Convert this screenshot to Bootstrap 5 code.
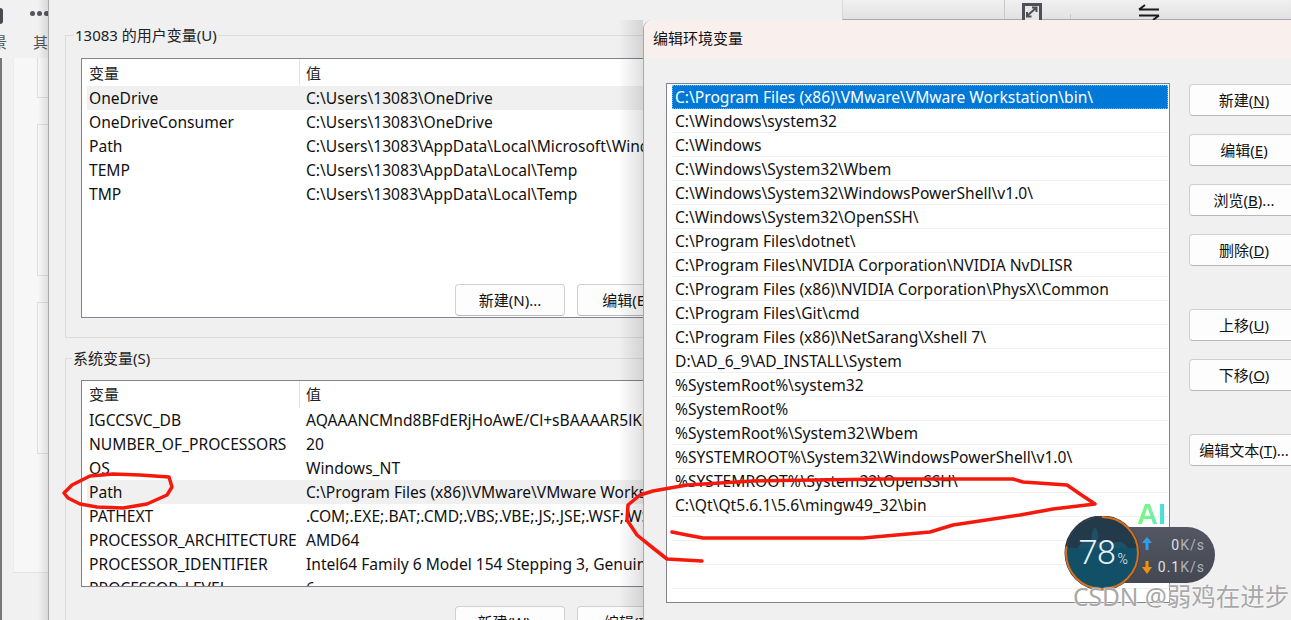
<!DOCTYPE html>
<html lang="zh-CN">
<head>
<meta charset="utf-8">
<title>编辑环境变量</title>
<link href="https://cdn.jsdelivr.net/npm/bootstrap@5.3.0/dist/css/bootstrap.min.css" rel="stylesheet">
<style>
html,body{margin:0;height:620px;overflow:hidden}
body{background:#f0f0f0;font-family:"Noto Sans","Noto Sans CJK SC",sans-serif;font-size:15.6px;color:#111;position:relative}
.win{position:absolute}
.bgwin{left:0;top:0;width:48px;height:620px;background:#f1f1f1;overflow:hidden}
.bg-dots{position:absolute;left:30px;top:11px;display:flex;gap:2px}
.bg-dots i{width:5px;height:5px;border-radius:50%;background:#55555f;display:block}
.bg-glyph{position:absolute;top:33px;font-size:15px;color:#555;line-height:18px}
.bg-mark{position:absolute;left:-3px;top:8px;width:6px;height:16px;border-radius:3px;background:#4a4a52}
.bg-edge{position:absolute;left:0;top:58px;bottom:0;width:2px;background:#77777c}
.bg-pane{position:absolute;left:13px;top:58px;width:60px;height:515px;background:#f7f7f7;border-bottom:1px solid #e2e2e2;border-left:1px solid #ececec}
.bg-cardbox{position:absolute;left:37px;width:40px;background:#f8f8f8;border:1px solid #dfdfdf}
.bg-cardbox.first{border-top:0}
.bg-shade{position:absolute;left:38px;top:0;bottom:0;width:10px;background:linear-gradient(90deg,rgba(0,0,0,0),rgba(0,0,0,.1))}
.varwin{left:48px;top:0;width:595px;height:620px;background:#f0f0f0;border-left:1px solid #a9a9ad;padding:35px 0 0 16px;overflow:hidden}
.grp{position:relative;width:760px;border:1px solid #dcdcdc;border-right:0}
.grp-user{height:303px}
.grp-sys{height:300px;margin-top:20px}
.grp-title{position:absolute;left:8px;top:-11px;padding:0 1px;line-height:20px;background:#f0f0f0;font-size:15px;color:#222}
.grp-sys .grp-title{left:6px}
.listv{position:absolute;left:15px;width:700px;background:#fff;border:1px solid #82828c;overflow:hidden;padding-left:5px}
.grp-user .listv{top:22px;height:260px}
.grp-sys .listv{top:21px;height:207px}
.rowv{display:flex;height:24px;line-height:24px;white-space:nowrap}
.rowv.headv{height:27px;line-height:29px;color:#222;font-size:15px}
.rowv.headv .cn{border-right:1px solid #e5e5e5}
.rowv.sysh{height:27px;line-height:27px}
.rowv.hl{background:#f0f0f0}
.cn{width:213px;flex:none;padding-left:2px;overflow:hidden}
.cv{padding-left:6px}
.wbtn{position:absolute;width:110px;height:32px;padding:0;background:#fdfdfd;border:1px solid #d0d0d0;border-bottom-color:#b8b8b8;border-radius:4px;font-size:15px;line-height:28px;color:#111;text-align:center;white-space:nowrap}
.editwin{left:643px;top:20px;width:648px;height:600px;background:#f0f0f0;border-left:1px solid #a8a8ac;border-top-left-radius:9px;overflow:hidden}
.editshadow{position:absolute;left:618px;top:20px;width:25px;height:600px;background:linear-gradient(90deg,rgba(0,0,0,0),rgba(0,0,0,.12))}
.edit-title{height:38px;background:#f9f0ed;line-height:37px;padding-left:9px;font-size:15px;color:#111}
.edit-body{display:flex;padding:25px 0 0 22px}
.listb{width:504px;height:520px;flex:none;background:#fff;border:1px solid #82828c;padding:1px 1px 0 5px;overflow:hidden}
.itm{height:24px;line-height:25px;padding-left:3px;border-bottom:1px solid #f0f0f0;white-space:nowrap}
.itm.sel{background:#0078d7;color:#fff;outline:1px dotted #7ab6ea;outline-offset:-1px;border-bottom:0}
.btnstack{display:flex;flex-direction:column;margin-left:19px;margin-top:1px}
.btnstack .wbtn{position:static;margin-bottom:18px;flex:none}
.btnstack .gap1{margin-top:25px}
.topbar{left:842px;top:0;width:449px;height:20px;background:linear-gradient(180deg,#f0f0f0,#e2e2e2);border-left:1px solid #d8d8d8;border-bottom:1px solid #a9a9ad}
.sep1,.sep2{position:absolute;width:1px;background:#c9c9c9;bottom:0}
.sep1{left:161px;top:0}.sep2{left:227px;top:14px}
.ink{position:absolute;left:0;top:0;width:1291px;height:620px;pointer-events:none}
.gauge{position:absolute;left:1064px;top:516px;width:152px;height:74px}
.pill{position:absolute;left:38px;top:11px;width:113px;height:56px;border-radius:0 28px 28px 0;background:linear-gradient(180deg,#545763,#444852);color:#aeb2ba;font-family:Roboto,sans-serif;font-size:14px;letter-spacing:1px}
.rate{position:absolute;right:10px;line-height:20px;white-space:nowrap}
.rate b{font-weight:400;color:#dfe1e5}
.pct{position:absolute;left:12px;top:16px;width:54px;text-align:center;color:#e8f2f6;font-family:Roboto,sans-serif;font-weight:300;font-size:34px;line-height:40px;white-space:nowrap;letter-spacing:-.5px}
.pct small{font-size:14px;margin-left:2px}
.ai{position:absolute;left:1137px;top:498px;font-family:"Liberation Sans",sans-serif;font-weight:700;font-size:29px;line-height:32px;background:linear-gradient(90deg,#7cf57d,#74f2a0 50%,#3fd6f0);-webkit-background-clip:text;background-clip:text;color:transparent}
.mark-wm{position:absolute;left:1073px;top:580px;font-family:"Noto Sans","Noto Sans CJK SC",sans-serif;font-size:24.5px;line-height:34px;color:#a8a8a8;white-space:nowrap;text-shadow:0 0 2px #fff,0 0 1px #fff}
</style>
</head>
<body>

<div class="win bgwin">
  <div class="bg-mark"></div>
  <div class="bg-dots"><i></i><i></i><i></i></div>
  <div class="bg-glyph" style="left:-8px">景</div>
  <div class="bg-glyph" style="left:33px">其</div>
  <div class="bg-pane"></div>
  <div class="bg-cardbox first" style="top:58px;height:40px"></div>
  <div class="bg-cardbox" style="top:124px;height:152px"></div>
  <div class="bg-cardbox" style="top:302px;height:152px"></div>
  <div class="bg-edge"></div>
  <div class="bg-shade"></div>
</div>

<div class="win varwin">
  <div class="grp grp-user">
    <div class="grp-title">13083 的用户变量(U)</div>
    <div class="listv">
      <div class="rowv headv"><div class="cn">变量</div><div class="cv">值</div></div>
      <div class="rowv hl"><div class="cn">OneDrive</div><div class="cv">C:\Users\13083\OneDrive</div></div>
      <div class="rowv"><div class="cn">OneDriveConsumer</div><div class="cv">C:\Users\13083\OneDrive</div></div>
      <div class="rowv"><div class="cn">Path</div><div class="cv">C:\Users\13083\AppData\Local\Microsoft\WindowsApps</div></div>
      <div class="rowv"><div class="cn">TEMP</div><div class="cv">C:\Users\13083\AppData\Local\Temp</div></div>
      <div class="rowv"><div class="cn">TMP</div><div class="cv">C:\Users\13083\AppData\Local\Temp</div></div>
    </div>
    <button class="wbtn btn" style="left:389px;top:248px">新建(N)...</button>
    <button class="wbtn btn" style="left:511px;top:248px">编辑(E)...</button>
  </div>
  <div class="grp grp-sys">
    <div class="grp-title">系统变量(S)</div>
    <div class="listv">
      <div class="rowv headv sysh"><div class="cn">变量</div><div class="cv">值</div></div>
      <div class="rowv"><div class="cn">IGCCSVC_DB</div><div class="cv">AQAAANCMnd8BFdERjHoAwE/Cl+sBAAAAR5lKpQ</div></div>
      <div class="rowv"><div class="cn">NUMBER_OF_PROCESSORS</div><div class="cv">20</div></div>
      <div class="rowv"><div class="cn">OS</div><div class="cv">Windows_NT</div></div>
      <div class="rowv hl"><div class="cn">Path</div><div class="cv">C:\Program Files (x86)\VMware\VMware Workstation\bin\</div></div>
      <div class="rowv"><div class="cn">PATHEXT</div><div class="cv">.COM;.EXE;.BAT;.CMD;.VBS;.VBE;.JS;.JSE;.WSF;.WSH</div></div>
      <div class="rowv"><div class="cn">PROCESSOR_ARCHITECTURE</div><div class="cv">AMD64</div></div>
      <div class="rowv"><div class="cn">PROCESSOR_IDENTIFIER</div><div class="cv">Intel64 Family 6 Model 154 Stepping 3, GenuineIntel</div></div>
      <div class="rowv"><div class="cn">PROCESSOR_LEVEL</div><div class="cv">6</div></div>
    </div>
    <button class="wbtn btn" style="left:389px;top:247px">新建(W)...</button>
    <button class="wbtn btn" style="left:511px;top:247px">编辑(I)...</button>
  </div>
</div>

<div class="win topbar">
  <div class="sep1"></div><div class="sep2"></div>
  <svg class="position-absolute" style="left:179px;top:3px" width="20" height="17" viewBox="0 0 20 17"><rect x="1.500" y="1.500" width="17" height="18" fill="#e6e6e6" stroke="#4d5058" stroke-width="3"/><path d="M6 12 14 5M10 4.500h4.500V9M9.500 13.500H5V9" fill="none" stroke="#4d5058" stroke-width="2"/></svg>
  <svg class="position-absolute" style="left:295px;top:4px" width="22" height="16" viewBox="0 0 22 16"><path d="M1 5.500h20M1 5.500 7 1M1 11.500h20M21 11.500 15 16" fill="none" stroke="#1a1a1a" stroke-width="2"/></svg>
</div>

<div class="editshadow"></div>
<div class="win editwin">
  <div class="edit-title">编辑环境变量</div>
  <div class="edit-body">
    <div class="listb">
      <div class="itm sel">C:\Program Files (x86)\VMware\VMware Workstation\bin\</div>
      <div class="itm">C:\Windows\system32</div>
      <div class="itm">C:\Windows</div>
      <div class="itm">C:\Windows\System32\Wbem</div>
      <div class="itm">C:\Windows\System32\WindowsPowerShell\v1.0\</div>
      <div class="itm">C:\Windows\System32\OpenSSH\</div>
      <div class="itm">C:\Program Files\dotnet\</div>
      <div class="itm">C:\Program Files\NVIDIA Corporation\NVIDIA NvDLISR</div>
      <div class="itm">C:\Program Files (x86)\NVIDIA Corporation\PhysX\Common</div>
      <div class="itm">C:\Program Files\Git\cmd</div>
      <div class="itm">C:\Program Files (x86)\NetSarang\Xshell 7\</div>
      <div class="itm">D:\AD_6_9\AD_INSTALL\System</div>
      <div class="itm">%SystemRoot%\system32</div>
      <div class="itm">%SystemRoot%</div>
      <div class="itm">%SystemRoot%\System32\Wbem</div>
      <div class="itm">%SYSTEMROOT%\System32\WindowsPowerShell\v1.0\</div>
      <div class="itm">%SYSTEMROOT%\System32\OpenSSH\</div>
      <div class="itm">C:\Qt\Qt5.6.1\5.6\mingw49_32\bin</div>
      <div class="itm">&nbsp;</div>
      <div class="itm">&nbsp;</div>
      <div class="itm">&nbsp;</div>
    </div>
    <div class="btnstack">
      <button class="wbtn btn">新建(<u>N</u>)</button>
      <button class="wbtn btn">编辑(<u>E</u>)</button>
      <button class="wbtn btn">浏览(<u>B</u>)...</button>
      <button class="wbtn btn">删除(<u>D</u>)</button>
      <button class="wbtn btn gap1">上移(<u>U</u>)</button>
      <button class="wbtn btn">下移(<u>O</u>)</button>
      <button class="wbtn btn gap1">编辑文本(<u>T</u>)...</button>
    </div>
  </div>
</div>

<svg class="ink" viewBox="0 0 1291 620" fill="none" stroke="#f5180c" stroke-width="3.500" stroke-linejoin="round" stroke-linecap="round">
  <path d="M64 493 72 485 90 476 113 474 140 475 169 477 172 487 167 495 147 504 123 508 97 507 80 504 68 498Z"/>
  <path d="M702 561 667 559 653 548 637 535 627 520 628 505 640 495 653 491 687 485 753 481 887 479 1013 479 1023 482 1067 485 1080 494 1095 504 1053 509 1020 515 953 525 930 532 863 538 820 538 703 538 687 535 672 532"/>
</svg>

<div class="ai">AI</div>
<div class="gauge">
  <div class="pill">
    <svg class="position-absolute" style="left:38px;top:9px" width="14" height="40" viewBox="0 0 14 40"><path d="M7 1 12 7H8.500V14h-3V7H2Z" fill="#2f9fe8"/><path d="M7 38 12 31H8.500V25h-3V31H2Z" fill="#f0920f"/></svg>
    <div class="rate" style="top:8px"><b>0</b>K/s</div>
    <div class="rate" style="top:30px"><b>0.1</b>K/s</div>
  </div>
  <svg class="position-absolute" style="left:0;top:0" width="76" height="76" viewBox="0 0 76 76">
    <defs><clipPath id="circ"><circle cx="38" cy="37" r="36"/></clipPath></defs>
    <g clip-path="url(#circ)">
      <rect width="76" height="32" fill="#233a4b"/>
      <path d="M14 32c3-7 9-8 14-6-1-6 0-12 3-15 3 4 4 10 2 15 7-2 12-1 15 2 4-3 11-4 16 4Z" fill="#1d5166"/>
      <rect y="32" width="76" height="44" fill="#125068"/>
    </g>
    <circle cx="38" cy="37" r="36.500" stroke="#2b3b48" stroke-width="2" fill="none"/>
    <circle cx="38" cy="37" r="36" stroke="#d96f1a" stroke-width="2" fill="none" pathLength="100" stroke-dasharray="78 22" transform="rotate(-90 38 37)"/>
  </svg>
  <div class="pct">78<small>%</small></div>
</div>
<div class="mark-wm">CSDN @弱鸡在进步</div>
</body>
</html>
